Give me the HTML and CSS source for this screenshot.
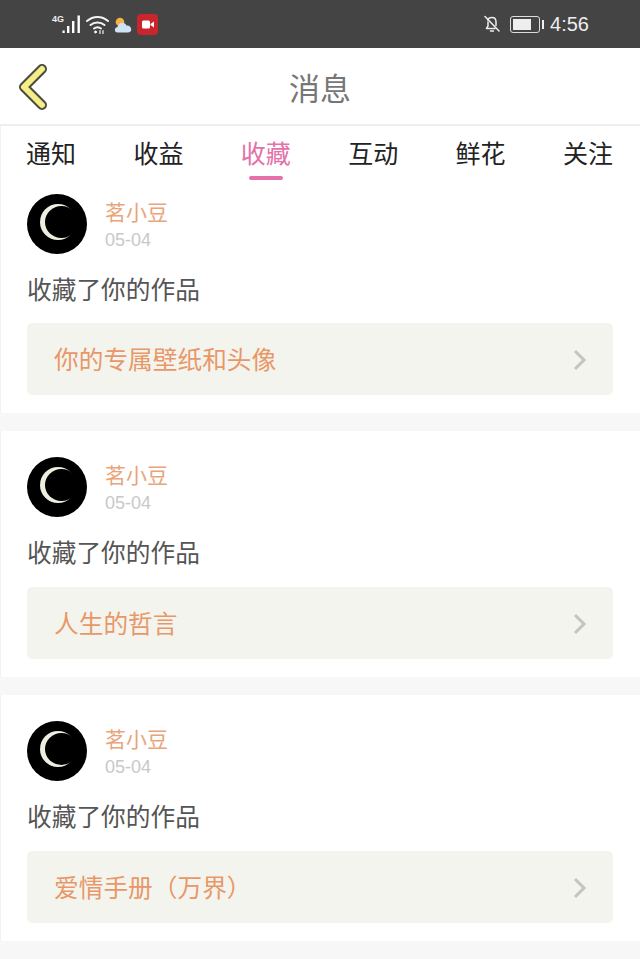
FILE: index.html
```html
<!DOCTYPE html>
<html lang="zh-CN">

<head>
    <meta charset="UTF-8" />
    <meta name="viewport" content="width=device-width, initial-scale=1.0" />
    <title>消息</title>
    <link rel="stylesheet" href="styles.css">
</head>

<body>
    <div class="status-bar">
        <div class="status-left">
            <span class="net">4G</span>
            <svg class="signal" width="20" height="20" viewBox="0 0 20 20">
                <rect x="0.500" y="15.500" width="2.200" height="2.500" fill="#fff" />
                <rect x="5" y="11" width="2.400" height="7" fill="#fff" />
                <rect x="10" y="6" width="2.400" height="12" fill="#fff" />
                <rect x="15.500" y="0.500" width="2.400" height="17.500" fill="#fff" />
            </svg>
            <svg class="wifi" width="23" height="20" viewBox="0 0 23 20" fill="none" stroke="#f4f4f4" stroke-width="2" stroke-linecap="round">
                <path d="M1 6 C7 0.500 16 0.500 22 6" />
                <path d="M4.500 10 C8.500 6.500 14.500 6.500 18.500 10" />
                <path d="M8 13.500 C10 12 13 12 15 13.500" />
                <circle cx="9.500" cy="17" r="1" fill="#fff" stroke-width="1" />
                <path d="M14 15.500 L14 18.500 M17 15.500 L17 18.500" stroke-width="1.200" />
            </svg>
            <svg class="weather" width="18" height="18" viewBox="0 0 18 18">
                <circle cx="6" cy="6" r="4.300" fill="#f2b544" />
                <path d="M3.500 16.500 C0 16.500 0 11.500 3.500 11 C4.500 6.500 10.500 5 12.500 9.500 C18 9 19 16.500 14 16.500 Z" fill="#cfe3f7" />
            </svg>
            <svg class="rec" width="21" height="21" viewBox="0 0 21 21">
                <rect width="21" height="21" rx="4" fill="#c9252c" />
                <rect x="5" y="6.500" width="8" height="8" rx="1.500" fill="#fff" />
                <path d="M13.500 10 L17 7.500 L17 13.500 L13.500 11 Z" fill="#fff" />
            </svg>
        </div>
        <div class="status-right">
            <svg class="bell" width="18" height="18" viewBox="0 0 18 18" fill="none" stroke="#eee" stroke-width="1.500" stroke-linecap="round" stroke-linejoin="round">
                <path d="M5 5.500 C5 4 6.500 2.500 9 2.500 C11.500 2.500 13 4.500 13 7 L13 10.500" />
                <path d="M5 7 L5 11 L3.500 13.500 L12 13.500" />
                <path d="M7.500 16 L10.500 16" />
                <path d="M2 1.500 L16 16" />
            </svg>
            <div class="battery">
                <div class="battery-level"></div>
            </div>
            <div class="battery-tip"></div>
            <span class="time">4:56</span>
        </div>
    </div>

    <header class="nav">
        <svg class="back" width="32" height="46" viewBox="0 0 32 46" fill="none" stroke-linecap="round" stroke-linejoin="round">
            <path d="M25 5 L7 23 L25 41" stroke="#4b4b45" stroke-width="10" />
            <path d="M25 5 L7 23 L25 41" stroke="#f5ee84" stroke-width="6" />
        </svg>
        <h1 class="nav-title">消息</h1>
    </header>

    <nav class="tabs">
        <a class="tab">通知</a>
        <a class="tab">收益</a>
        <a class="tab active">收藏</a>
        <a class="tab">互动</a>
        <a class="tab">鲜花</a>
        <a class="tab">关注</a>
    </nav>

    <main class="list">
        <section class="card first">
            <div class="user">
                <div class="avatar"></div>
                <div class="meta">
                    <div class="name">茗小豆</div>
                    <div class="date">05-04</div>
                </div>
            </div>
            <p class="action">收藏了你的作品</p>
            <div class="work">
                <span>你的专属壁纸和头像</span>
                <svg width="14" height="22" viewBox="0 0 14 22" fill="none" stroke="#c4c5be" stroke-width="3">
                    <path d="M2 2 L11 11 L2 20" />
                </svg>
            </div>
        </section>
        <section class="card">
            <div class="user">
                <div class="avatar"></div>
                <div class="meta">
                    <div class="name">茗小豆</div>
                    <div class="date">05-04</div>
                </div>
            </div>
            <p class="action">收藏了你的作品</p>
            <div class="work">
                <span>人生的哲言</span>
                <svg width="14" height="22" viewBox="0 0 14 22" fill="none" stroke="#c4c5be" stroke-width="3">
                    <path d="M2 2 L11 11 L2 20" />
                </svg>
            </div>
        </section>
        <section class="card">
            <div class="user">
                <div class="avatar"></div>
                <div class="meta">
                    <div class="name">茗小豆</div>
                    <div class="date">05-04</div>
                </div>
            </div>
            <p class="action">收藏了你的作品</p>
            <div class="work">
                <span>爱情手册（万界）</span>
                <svg width="14" height="22" viewBox="0 0 14 22" fill="none" stroke="#c4c5be" stroke-width="3">
                    <path d="M2 2 L11 11 L2 20" />
                </svg>
            </div>
        </section>
    </main>
</body>

</html>
```

FILE: styles.css
```css
* {
    box-sizing: border-box;
}

html,
body {
    margin: 0;
    padding: 0;
}

body {
    width: 640px;
    height: 959px;
    overflow: hidden;
    background-color: #f8f7f7;
    font-family: "Noto Sans CJK SC", "Liberation Sans", sans-serif;
}

.status-bar {
    height: 48px;
    background-color: #444;
    color: #eee;
    display: flex;
    align-items: center;
    justify-content: space-between;
    padding: 0 51px 0 52px;
}

.status-left,
.status-right {
    display: flex;
    align-items: center;
}

.net {
    width: 10px;
    margin-top: -11px;
    font-family: "Liberation Sans", sans-serif;
    font-size: 9px;
    font-weight: bold;
    line-height: 10px;
    white-space: nowrap;
}

.signal {
    margin-top: 2px;
}

.wifi {
    margin-left: 4px;
    margin-top: 1px;
}

.weather {
    margin-left: 5px;
    margin-top: 1px;
}

.rec {
    margin-left: 5px;
}

.bell {
    margin-right: 9px;
}

.battery {
    width: 30px;
    height: 17px;
    padding: 2px;
    border: 1px solid #ddd;
    border-radius: 3px;
}

.battery-level {
    width: 18px;
    height: 100%;
    background-color: #eee;
}

.battery-tip {
    width: 2px;
    height: 9px;
    margin-left: 2px;
    background-color: #eee;
}

.time {
    margin-left: 6px;
    font-family: "Liberation Sans", sans-serif;
    font-size: 20px;
}

.nav {
    height: 78px;
    background-color: #fff;
    border-bottom: 2px solid #eee;
    display: flex;
    align-items: center;
    justify-content: center;
    position: relative;
}

.back {
    position: absolute;
    left: 17px;
    top: 16px;
}

.nav-title {
    margin: 0;
    color: #777;
    font-size: 31px;
    font-weight: normal;
}

.tabs {
    height: 55px;
    background-color: #fff;
    border-left: 1px solid #f2f2f2;
    display: flex;
    justify-content: space-between;
    padding: 0 27px 0 25px;
}

.tab {
    position: relative;
    color: #222;
    font-size: 25px;
    line-height: 52px;
}

.tab.active {
    color: #e571a8;
}

.tab.active::after {
    content: "";
    position: absolute;
    left: 8px;
    right: 8px;
    bottom: 1px;
    height: 4px;
    border-radius: 2px;
    background-color: #e571a8;
}

.card {
    height: 246px;
    margin-bottom: 18px;
    padding: 26px 27px 0;
    background-color: #fff;
    border-left: 1px solid #f2f2f2;
}

.card.first {
    height: 232px;
    padding-top: 13px;
}

.user {
    display: flex;
    align-items: center;
    height: 60px;
    margin-left: -1px;
}

.avatar {
    width: 60px;
    height: 60px;
    border-radius: 50%;
    background-color: #000;
    position: relative;
    overflow: hidden;
}

/* crescent: light disc with a black disc over it */
.avatar::before {
    content: "";
    position: absolute;
    left: 13px;
    top: 10px;
    width: 36px;
    height: 36px;
    border-radius: 50%;
    background-color: #eeeee0;
}

.avatar::after {
    content: "";
    position: absolute;
    left: 17.500px;
    top: 12px;
    width: 33px;
    height: 32px;
    border-radius: 50%;
    background-color: #000;
}

.meta {
    margin-left: 18px;
}

.name {
    color: #e8a57a;
    font-size: 21px;
    line-height: 30px;
}

.date {
    color: #c8c8c8;
    font-family: "Liberation Sans", sans-serif;
    font-size: 18px;
    line-height: 24px;
    margin-top: 2px;
}

.action {
    margin: 16px 0 0 -1px;
    color: #555;
    font-size: 24.700px;
    line-height: 36px;
}

.work {
    height: 72px;
    margin: 18px 0 0 -1px;
    padding: 0 26px 2px 27px;
    background-color: #f4f4ee;
    border-radius: 5px;
    display: flex;
    align-items: center;
    justify-content: space-between;
    color: #e89868;
    font-size: 24.700px;
}

.first .work {
    margin-top: 17px;
}

.work svg {
    margin-top: 3px;
}
```
